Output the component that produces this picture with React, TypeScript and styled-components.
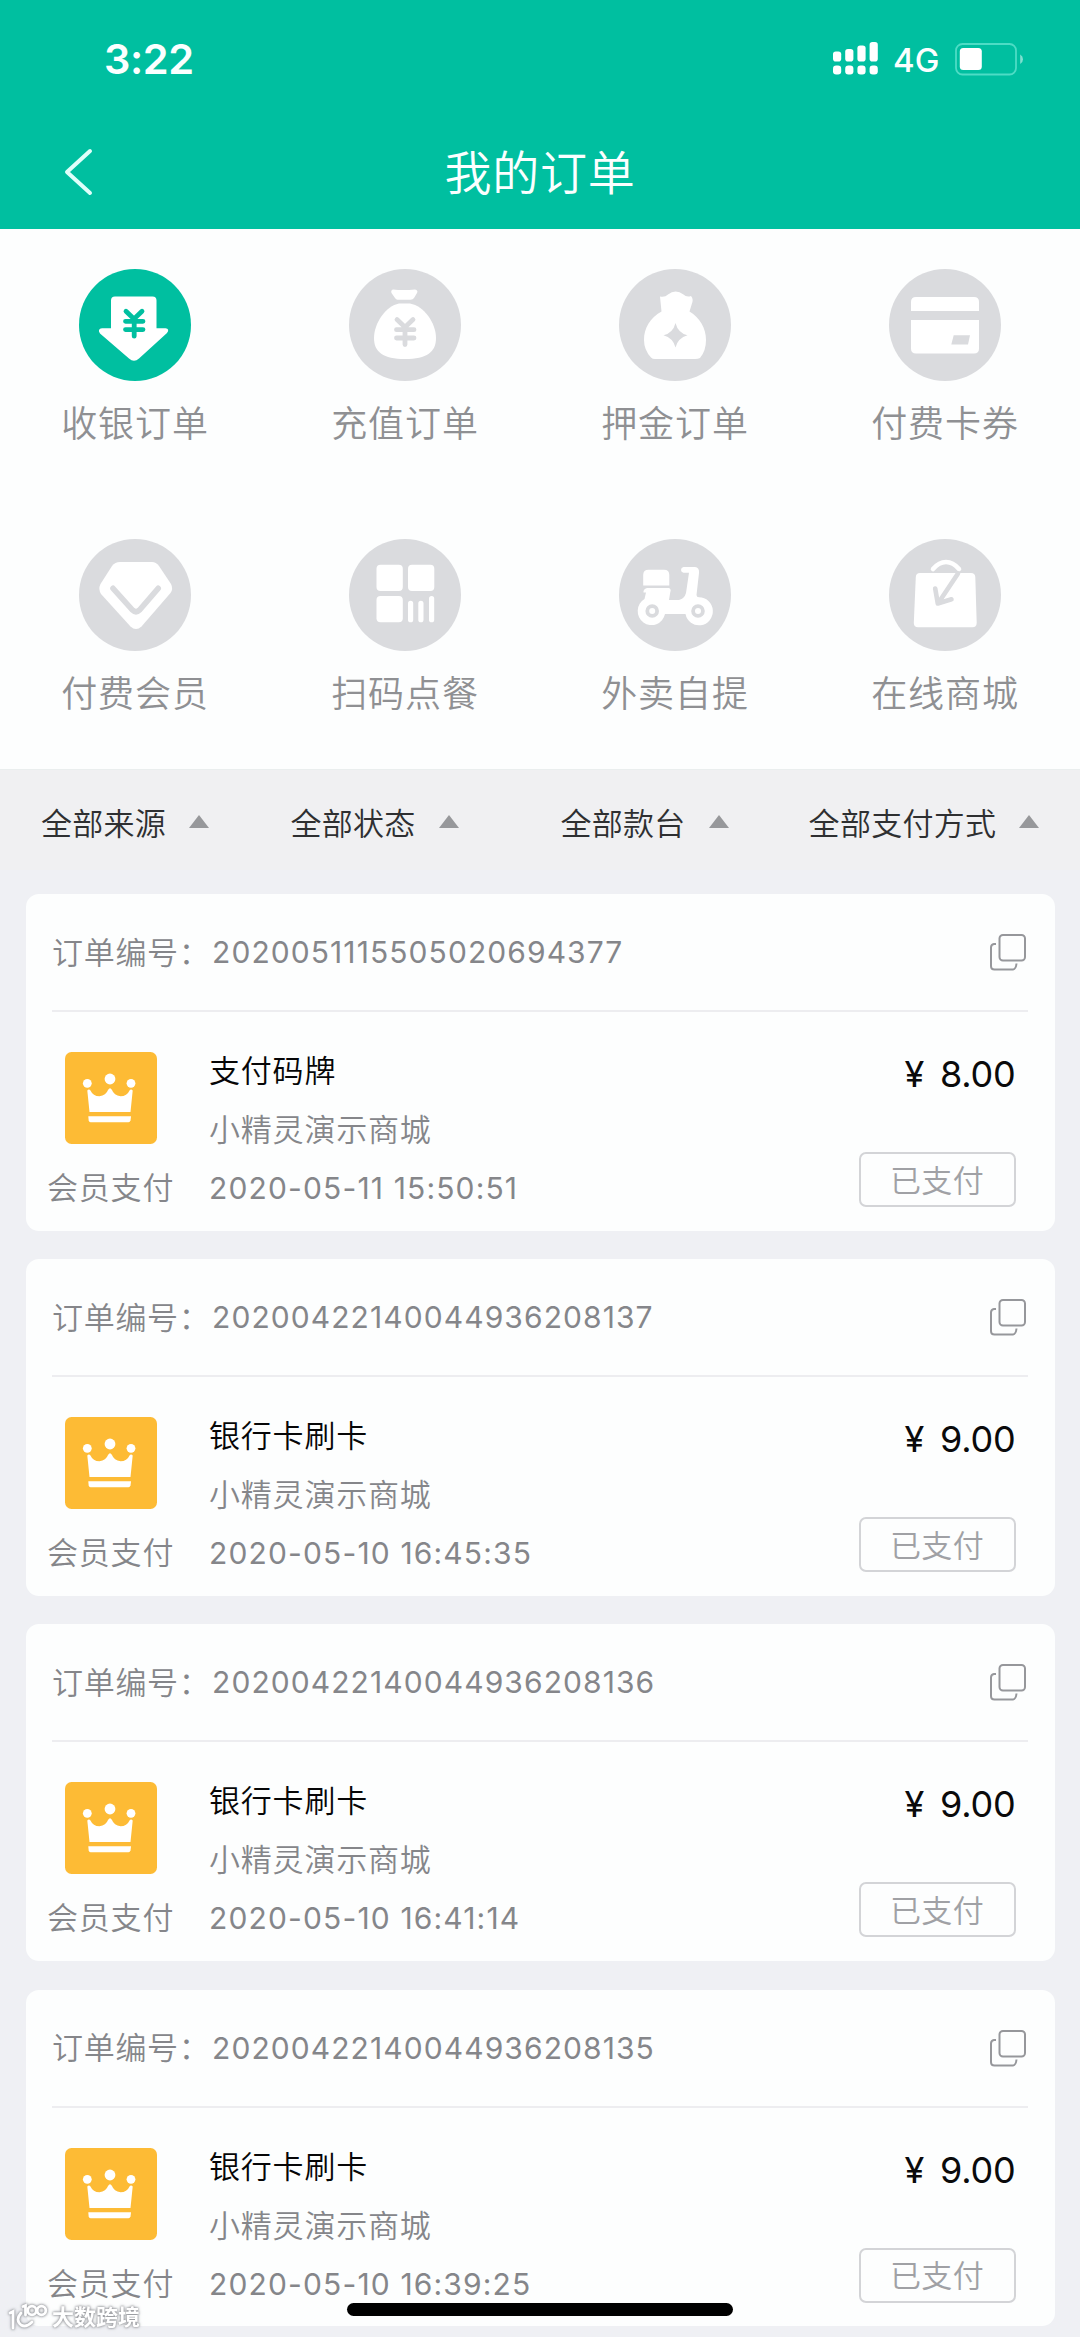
import React from 'react';
import styled, { createGlobalStyle } from 'styled-components';

const GREEN = '#00bfa0';
const GREY = '#dadbde';
const SURFACE = '#fdfefe';

const GlobalStyle = createGlobalStyle`
  * { box-sizing: border-box; }
  html, body { margin: 0; padding: 0; }
  body {
    background: #eff0f4;
    font-family: Inter, "Noto Sans CJK SC", sans-serif;
    overflow: hidden;
  }
`;

const Screen = styled.div`
  position: relative;
  width: 1080px;
  height: 2337px;
  overflow: hidden;
  background: #eff0f4;
`;

const Header = styled.header`
  height: 229px;
  background: ${GREEN};
  color: #fbffff;
`;

const StatusBar = styled.div`
  display: flex;
  align-items: center;
  height: 118px;
  padding: 0 56px 0 104px;
`;

const Clock = styled.span`
  flex: 1;
  font-size: 41.5px;
  font-weight: 600;
  letter-spacing: -0.4px;
  line-height: 48px;
`;

const SignalIcon = styled.svg`
  display: block;
  width: 45px;
  height: 33px;
  margin-top: -2px;
`;

const Network = styled.span`
  width: 62px;
  padding-left: 15px;
  margin-top: 2px;
  font-size: 33px;
  font-weight: 500;
  line-height: 40px;
`;

const BatteryIcon = styled.svg`
  display: block;
  width: 69px;
  height: 33px;
  margin-left: 15px;
`;

const NavBar = styled.div`
  display: grid;
  grid-template-columns: 160px 1fr 160px;
  align-items: center;
  height: 108px;
`;

const BackButton = styled.button`
  display: flex;
  padding: 0 0 0 64px;
  border: 0;
  background: none;
`;

const Title = styled.h1`
  margin: 0;
  padding-top: 1px;
  font-size: 47px;
  font-weight: 350;
  letter-spacing: 0.8px;
  line-height: 60px;
  text-align: center;
`;

const Categories = styled.nav`
  display: grid;
  grid-template-columns: repeat(4, 270px);
  grid-template-rows: 270px 270px;
  height: 541px;
  background: ${SURFACE};
  border-bottom: 1px solid #eaeeee;
`;

const Category = styled.div`
  display: flex;
  flex-direction: column;
  align-items: center;
  padding-top: 40px;
`;

const CategoryIcon = styled.svg`
  display: block;
  width: 112px;
  height: 112px;
`;

const CategoryLabel = styled.span`
  margin-top: 18px;
  font-size: 36px;
  font-weight: 350;
  letter-spacing: 0.9px;
  line-height: 50px;
  color: #8f9093;
`;

const Filters = styled.div`
  display: grid;
  grid-template-columns: 250px 249px 291px 268px;
  height: 100px;
  background: #f0f0f2;
`;

const Filter = styled.button`
  display: flex;
  align-items: center;
  justify-content: center;
  gap: 23px;
  padding: 0;
  margin-top: 4px;
  height: 100px;
  border: 0;
  background: none;
  font: 350 31px/44px Inter, "Noto Sans CJK SC", sans-serif;
  letter-spacing: 0.3px;
  color: #2e2f31;
`;

const Caret = styled.span`
  margin-top: -5px;
  border: 10px solid transparent;
  border-top: 0;
  border-bottom: 13px solid #97989b;
`;

const Orders = styled.main`
  display: flex;
  flex-direction: column;
  gap: 28.4px;
  padding: 24px 25.5px 0;
`;

const Card = styled.article`
  height: 336.8px;
  flex: none;
  padding: 0 27px 0 26.5px;
  border-radius: 13px;
  background: ${SURFACE};
`;

const CardHead = styled.div`
  display: flex;
  align-items: center;
  height: 118px;
  border-bottom: 2px solid #ededf0;
`;

const OrderLabel = styled.span`
  width: 160px;
  padding-top: 1px;
  font-size: 31px;
  font-weight: 350;
  letter-spacing: 0.7px;
  line-height: 44px;
  white-space: nowrap;
  color: #85868a;
`;

const OrderNo = styled.span`
  flex: 1;
  font-size: 30px;
  letter-spacing: 1.08px;
  line-height: 44px;
  color: #85868a;
`;

const CopyIcon = styled.svg`
  display: block;
  width: 38px;
  height: 38px;
  margin-right: 1px;
`;

const CardBody = styled.div`
  display: grid;
  grid-template-columns: 157px 1fr 160px;
`;

const Method = styled.div`
  display: flex;
  flex-direction: column;
  align-items: flex-start;
  padding-top: 40px;
`;

const Tile = styled.svg`
  display: block;
  width: 92px;
  height: 92px;
  margin-left: 13px;
`;

const MethodLabel = styled.span`
  margin: 22px 0 0 -5px;
  font-size: 31px;
  font-weight: 350;
  letter-spacing: 0.8px;
  line-height: 44px;
  color: #85868a;
`;

const Details = styled.div`
  display: flex;
  flex-direction: column;
  padding-top: 37px;
  line-height: 44px;
  font-size: 31px;
  font-weight: 350;
  letter-spacing: 0.8px;
`;

const Name = styled.strong`
  font-weight: 350;
  color: #060607;
`;

const Shop = styled.span`
  margin-top: 15px;
  color: #85868a;
`;

const Time = styled.time`
  margin-top: 14px;
  font-size: 30px;
  font-weight: 400;
  letter-spacing: 1.15px;
  color: #85868a;
`;

const Payment = styled.div`
  display: flex;
  flex-direction: column;
  align-items: flex-end;
  padding: 38px 12px 0 0;
`;

const Price = styled.span`
  font-size: 36px;
  line-height: 48px;
  letter-spacing: -0.2px;
  word-spacing: 6px;
  white-space: nowrap;
  color: #0a0a0b;
`;

const Badge = styled.span`
  display: flex;
  align-items: center;
  justify-content: center;
  width: 157px;
  height: 55px;
  margin-top: 54px;
  padding-bottom: 3px;
  border: 2px solid #d3d4d7;
  border-radius: 7px;
  font-size: 31px;
  font-weight: 350;
  letter-spacing: 0.4px;
  color: #a0a1a5;
`;

const HomeIndicator = styled.div`
  position: absolute;
  left: 347px;
  top: 2303px;
  width: 386px;
  height: 13px;
  border-radius: 7px;
  background: #000;
`;

const Watermark = styled.div`
  position: absolute;
  left: 8px;
  top: 2301px;
  display: flex;
  align-items: center;
  gap: 4px;
  height: 32px;
  color: #fff;
  font-size: 22px;
  font-weight: 700;
  line-height: 32px;
  filter: drop-shadow(0 0 1px #8b8d91) drop-shadow(0 0 1.5px #b4b6ba);
`;

const categories = [
  {
    label: '收银订单',
    active: true,
    art: (
      <>
        <path d="M36 27.5H73.5Q77.5 27.5 77.5 31.5V59.3H86.5Q91 60 88 64L60 89.5Q55 94 50 89.5L21 64.5Q18 60 23 59.3H32V31.5Q32 27.5 36 27.5Z" fill="#fff" />
        <path d="M47 42.2 55 50l8-7.8M46.5 52.3h17.5M46.5 60.6h17.5M55.2 50v17.2" stroke={GREEN} strokeWidth="4.8" strokeLinecap="round" />
      </>
    ),
  },
  {
    label: '充值订单',
    art: (
      <>
        <path d="M44 20.5Q54 21.5 66 20.5 69.5 21.5 68 24L65 29Q64 30.8 61.5 30.8H48.5Q47 30.8 46 29L42.5 24Q41.5 21 44 20.5Z" fill="#fff" />
        <path d="M50 34.5H61C75 37 87 54 87 69 87 83 78 90 56 90S25 83 25 69C25 54 37 37 50 34.5Z" fill="#fff" />
        <path d="M48 50.6 56 58.2l8-7.6M47.5 60.7H65M47.5 69H65M56 58v17.5" stroke={GREY} strokeWidth="4.8" strokeLinecap="round" />
      </>
    ),
  },
  {
    label: '押金订单',
    art: (
      <>
        <path d="M41 27.5Q46 28.5 49 25.5 56.5 19.5 64.5 25.5 67.5 28.5 72 27Q75 30 72.5 36L70.5 42.5C81 49 87 59 87 71Q87 82 81 89 79 90 76 90H36Q33.5 90 32 88.5 25 81 25 71C25 59 31 49 42.500 42.500 40 37 39.600 33Q39.500 28.500 41 27.500Z" fill="#fff" />
        <path d="M56.500 54Q59 64 68.500 66.300 59 69 56.500 78.500 54 69 44.500 66.300 54 64 56.500 54Z" fill={GREY} />
      </>
    ),
  },
  {
    label: '付费卡券',
    art: (
      <>
        <path d="M22 42V33Q22 28 27 28H85Q90 28 90 33V42Z" fill="#fff" />
        <path d="M22 51H90V79.500Q90 84.500 85 84.500H27Q22 84.500 22 79.500Z" fill="#fff" />
        <path d="M64.700 66.300H81L79 75.500H62.300Z" fill={GREY} />
      </>
    ),
  },
  {
    label: '付费会员',
    art: (
      <>
        <path d="M41 23H73Q77 23 80 27L92 45Q94.500 50 91.500 54L62.500 87.500Q57 92.500 51.500 87.500L22 55Q19 50 21.500 45L33 27Q36 23 41 23Z" fill="#fff" />
        <path d="M34 49.300 53.500 71Q57 74.500 60.500 71L79.200 49.300" stroke={GREY} strokeWidth="5.600" strokeLinecap="round" />
      </>
    ),
  },
  {
    label: '扫码点餐',
    art: (
      <g fill="#fff">
        <rect x="27.5" y="25.7" width="26.3" height="26.3" rx="4" />
        <rect x="59" y="25.7" width="26.3" height="26.3" rx="4" />
        <rect x="27.5" y="57" width="26.3" height="26.3" rx="4" />
        <rect x="59" y="61.8" width="5.2" height="21.5" rx="2.6" />
        <rect x="69.3" y="61.8" width="5.2" height="21.5" rx="2.6" />
        <rect x="80" y="57" width="5.2" height="26.3" rx="2.6" />
      </g>
    ),
  },
  {
    label: '外卖自提',
    art: (
      <>
        <path d="M24.200 46.500V36Q24.200 30.700 29.500 30.700H45Q50.300 30.700 50.300 36V46.500Z" fill="#fff" />
        <path d="M28 49H50Q52.500 50.500 51.300 53L50 61H60Q65.500 59.500 67 54L70 33.800H64.500Q62 33.200 62 31 62 28.500 64.500 28H76Q80.500 28.500 80 34L77.500 56Q77.500 58.200 80 58.300A13.800 14 0 1 1 66.500 75H46A13.800 14 0 1 1 25.500 60L27 53.500H24.500Q24 50 28 49Z" fill="#fff" />
        <circle cx="33.200" cy="72" r="4.900" stroke={GREY} strokeWidth="3.800" />
        <circle cx="79" cy="72" r="4.900" stroke={GREY} strokeWidth="3.800" />
      </>
    ),
  },
  {
    label: '在线商城',
    art: (
      <>
        <path d="M31 34H82Q86 34 86.300 38L87.700 84Q87.500 88.300 83.500 88.300H29Q25 88.300 24.800 84L26.800 38Q27 34 31 34Z" fill="#fff" />
        <path d="M44 30Q50 23 57 23T70 30" stroke="#fff" strokeWidth="4.600" strokeLinecap="round" />
        <path d="M69 34.500 50 63M46.200 49.500 48.800 64.500 62.500 60.300" stroke={GREY} strokeWidth="4.600" strokeLinecap="round" strokeLinejoin="round" />
      </>
    ),
  },
];

const filters = ['全部来源', '全部状态', '全部款台', '全部支付方式'];

const orders = [
  { no: '2020051115505020694377', name: '支付码牌', time: '2020-05-11 15:50:51', price: '8.00' },
  { no: '20200422140044936208137', name: '银行卡刷卡', time: '2020-05-10 16:45:35', price: '9.00' },
  { no: '20200422140044936208136', name: '银行卡刷卡', time: '2020-05-10 16:41:14', price: '9.00' },
  { no: '20200422140044936208135', name: '银行卡刷卡', time: '2020-05-10 16:39:25', price: '9.00' },
];

const Signal = () => (
  <SignalIcon viewBox="0 0 45 33" fill="#fff">
    {[9.5, 7, 3.5, 0].map((top, i) => (
      <React.Fragment key={top}>
        <rect x={i * 12.2} y={top} width="8.2" height={19.5 - top} rx="2.8" />
        <rect x={i * 12.2} y="23.5" width="8.2" height="9" rx="3.2" />
      </React.Fragment>
    ))}
  </SignalIcon>
);

const Battery = () => (
  <BatteryIcon viewBox="0 0 69 33" fill="none">
    <rect x="1" y="1" width="60" height="30.5" rx="6.5" stroke="#4ddcc5" strokeWidth="1.8" />
    <rect x="4.8" y="5" width="22" height="22" rx="3.5" fill="#fff" />
    <path d="M65.2 11.5Q68 13 68 16.3T65.200 21Z" fill="#7fe0d0" />
  </BatteryIcon>
);

const Crown = () => (
  <Tile viewBox="0 0 92 92">
    <rect width="92" height="92" rx="6.5" fill="#fdbb35" />
    <g fill="#fff">
      <circle cx="45" cy="27" r="5.4" />
      <circle cx="22.300" cy="31.300" r="4.400" />
      <circle cx="66" cy="31.300" r="4.400" />
      <path d="M22.300 38.500Q24 36.500 25.500 38.500 28 44.300 34.500 44.300 41 43.500 43 38 45 34.500 47 38 49 43.500 55.500 44.300 62 44.300 64.500 38.500 66 36.500 67.700 38.500L65.500 60H24.500Z" />
      <path d="M23.300 64.200H66L65.500 68.500Q65 70.300 63.500 70.300H25.500Q24 70.300 23.700 68.500Z" />
    </g>
  </Tile>
);

const OrderCard = ({ order }: { order: (typeof orders)[number] }) => (
  <Card>
    <CardHead>
      <OrderLabel>订单编号：</OrderLabel>
      <OrderNo>{order.no}</OrderNo>
      <CopyIcon viewBox="0 0 38 38" fill="none" stroke="#96979b" strokeWidth="2">
        <rect x="10.5" y="2" width="25.5" height="25.5" rx="3.5" />
        <path d="M7 11H5Q2 11.5 2 14.5V33Q2 36.5 5.500 36.500H24Q27 36 27.500 30.500" />
      </CopyIcon>
    </CardHead>
    <CardBody>
      <Method>
        <Crown />
        <MethodLabel>会员支付</MethodLabel>
      </Method>
      <Details>
        <Name>{order.name}</Name>
        <Shop>小精灵演示商城</Shop>
        <Time>{order.time}</Time>
      </Details>
      <Payment>
        <Price>¥ {order.price}</Price>
        <Badge>已支付</Badge>
      </Payment>
    </CardBody>
  </Card>
);

export default function App() {
  return (
    <Screen>
      <GlobalStyle />
      <Header>
        <StatusBar>
          <Clock>3:22</Clock>
          <Signal />
          <Network>4G</Network>
          <Battery />
        </StatusBar>
        <NavBar>
          <BackButton aria-label="返回">
            <svg width="30" height="48" viewBox="0 0 30 48" fill="none" stroke="#dffffb" strokeWidth="4" strokeLinecap="round" strokeLinejoin="round">
              <path d="M26 3 3 24l23 21" />
            </svg>
          </BackButton>
          <Title>我的订单</Title>
        </NavBar>
      </Header>
      <Categories>
        {categories.map((c) => (
          <Category key={c.label}>
            <CategoryIcon viewBox="0 0 112 112" fill="none">
              <circle cx="56" cy="56" r="56" fill={c.active ? GREEN : GREY} />
              {c.art}
            </CategoryIcon>
            <CategoryLabel>{c.label}</CategoryLabel>
          </Category>
        ))}
      </Categories>
      <Filters>
        {filters.map((f) => (
          <Filter key={f}>
            {f}
            <Caret />
          </Filter>
        ))}
      </Filters>
      <Orders>
        {orders.map((o) => (
          <OrderCard key={o.no} order={o} />
        ))}
      </Orders>
      <HomeIndicator />
      <Watermark>
        <svg width="40" height="30" viewBox="0 0 40 30" fill="none" stroke="#fff" strokeWidth="2.8" strokeLinecap="round">
          <path d="M2 11 5 9.500V26M13 11Q7 18 13 23 18 26 24 20M15 4.500 17.500 3.500V13" />
          <circle cx="24" cy="8.500" r="4.300" />
          <circle cx="33.500" cy="8.500" r="4.300" />
        </svg>
        大数跨境
      </Watermark>
    </Screen>
  );
}
